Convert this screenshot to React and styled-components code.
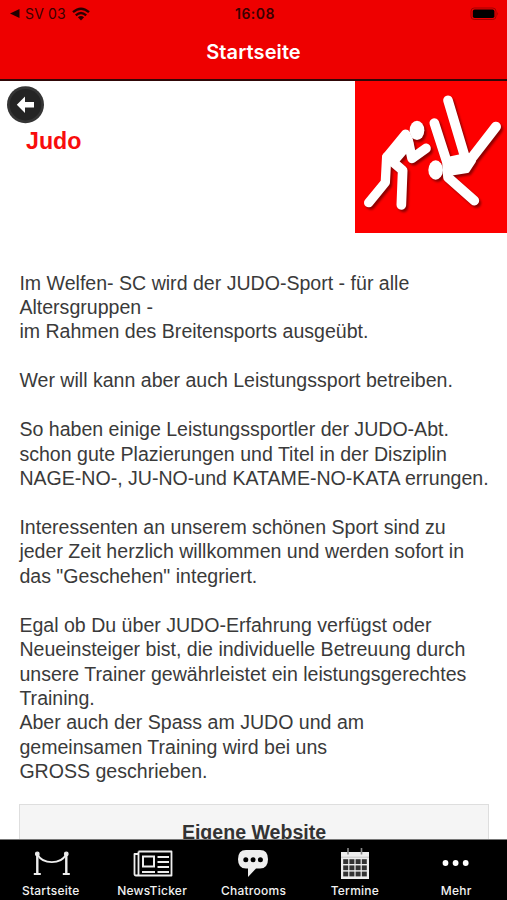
import React from 'react';
import styled, {createGlobalStyle} from "styled-components";

const GlobalStyle = createGlobalStyle`
  * {
    box-sizing: border-box;
  }

  body {
    margin: 0;
    background-color: #fff;
    font-family: "Liberation Sans", Arial, sans-serif;
  }
`

const Screen = styled.div`
  width: 507px;
  height: 900px;
  display: flex;
  flex-direction: column;
  overflow: hidden;
`

const Header = styled.header`
  height: 81px;
  flex-shrink: 0;
  background-color: #ee0000;
  border-bottom: 2px solid #300808;
  font-family: Inter, sans-serif;
`

const StatusBar = styled.div`
  height: 27px;
  display: grid;
  grid-template-columns: 1fr 1fr 1fr;
  align-items: center;
  padding: 0 7px 0 10px;
  color: #3a0000;
  font-size: 14px;
`

const StatusLeft = styled.div`
  display: flex;
  align-items: center;
`

const Carrier = styled.span`
  margin: 0 6px 0 5px;
  letter-spacing: 0.15px;
`

const Clock = styled.span`
  text-align: center;
  font-weight: 600;
  letter-spacing: 0.5px;
`

const StatusRight = styled.div`
  display: flex;
  justify-content: flex-end;
`

const HeaderTitle = styled.h1`
  margin: 0;
  height: 50px;
  line-height: 50px;
  text-align: center;
  color: #fff;
  font-size: 20px;
  font-weight: 600;
  letter-spacing: 0.1px;
`

const Content = styled.main`
  flex: 1;
  min-height: 0;
  overflow: hidden;
  background-color: #fff;
`

const Intro = styled.section`
  display: flex;
  justify-content: space-between;
  height: 152px;
`

const IntroLeft = styled.div`
  padding: 4px 0 0 6px;
`

const BackButton = styled.button`
  display: block;
  width: 39px;
  height: 39px;
  padding: 0;
  border: 0;
  background: none;
`

const Department = styled.h2`
  margin: 4px 0 0 20px;
  color: #f80d0d;
  font-size: 23.2px;
  line-height: 26px;
  font-weight: 700;
`

const Text = styled.div`
  padding: 37.5px 0 0 19.4px;
  color: #3a3a3a;
  font-size: 19.57px;
  line-height: 24.45px;
`

const Line = styled.div`
  height: 24.45px;
  white-space: nowrap;
`

const WebsiteCard = styled.div`
  height: 60px;
  margin: 20px 18px 0 19px;
  padding-top: 14px;
  border: 1px solid #dedede;
  background-color: #f5f5f5;
  color: #333;
  font-size: 19.57px;
  line-height: 26px;
  font-weight: 700;
  text-align: center;
`

const TabBar = styled.nav`
  height: 61px;
  flex-shrink: 0;
  display: grid;
  grid-template-columns: repeat(5, 1fr);
  background-color: #000;
  border-top: 1px solid #777;
`

const Tab = styled.div`
  display: flex;
  flex-direction: column;
  align-items: center;
  padding-top: 5px;
  color: #f2f2f2;
  font-family: Inter, sans-serif;
  font-size: 12px;
  line-height: 14px;
  font-weight: 500;
  letter-spacing: 0.25px;
`

const TabIcon = styled.svg`
  width: 48px;
  height: 36px;
  margin-bottom: 3px;
`

const lines = [
    "Im Welfen- SC wird der JUDO-Sport - für alle",
    "Altersgruppen -",
    "im Rahmen des Breitensports ausgeübt.",
    "",
    "Wer will kann aber auch Leistungssport betreiben.",
    "",
    "So haben einige Leistungssportler der JUDO-Abt.",
    "schon gute Plazierungen und Titel in der Disziplin",
    "NAGE-NO-, JU-NO-und KATAME-NO-KATA errungen.",
    "",
    "Interessenten an unserem schönen Sport sind zu",
    "jeder Zeit herzlich willkommen und werden sofort in",
    "das \"Geschehen\" integriert.",
    "",
    "Egal ob Du über JUDO-Erfahrung verfügst oder",
    "Neueinsteiger bist, die individuelle Betreuung durch",
    "unsere Trainer gewährleistet ein leistungsgerechtes",
    "Training.",
    "Aber auch der Spass am JUDO und am",
    "gemeinsamen Training wird bei uns",
    "GROSS geschrieben.",
];

const Wifi = () => (
    <svg width="18" height="14" viewBox="0 0 18 14" fill="none" stroke="#2a0000" strokeWidth="2.4">
        <path d="M1 5.2Q9 -1.8 17 5.2"/>
        <path d="M3.8 8.3Q9 3.8 14.2 8.3"/>
        <path d="M9 13.4L5.9 10.3Q9 7.9 12.1 10.3Z" fill="#2a0000" stroke="none"/>
    </svg>
);

const Battery = () => (
    <svg width="30" height="14" viewBox="0 0 30 14">
        <rect x="1" y="1" width="25" height="11.5" rx="3.2" fill="none" stroke="#a00000"/>
        <rect x="2.8" y="2.6" width="21.6" height="8.4" rx="1.8" fill="#000"/>
        <path d="M27.3 4.8q1.7 1.9 0 3.9z" fill="#a00000"/>
    </svg>
);

const BackIcon = () => (
    <svg width="39" height="39" viewBox="0 0 39 39">
        <circle cx="19.5" cy="19.7" r="18.5" fill="#353535"/>
        <circle cx="19.5" cy="19.7" r="15.8" fill="#242424"/>
        <path d="M10.8 19.8L19 11.6V17.1H28V22.5H19V28Z" fill="#fff"/>
    </svg>
);

// two wrestlers: the thrower on the left, the falling one on the right
const Fighters = () => (
    <g strokeLinecap="round" strokeLinejoin="round">
        <ellipse cx="201" cy="166" rx="22" ry="29" stroke="none"/>
        <path d="M167 178L111 246L136 252L176 206Z" strokeWidth="29"/>
        <path d="M174 194L186 250L228 220" strokeWidth="29" fill="none"/>
        <path d="M110 246L106 322L56 383" strokeWidth="28" fill="none"/>
        <path d="M124 257L158 286L154 390" strokeWidth="29" fill="none"/>
        <ellipse cx="257" cy="285" rx="22" ry="29" stroke="none"/>
        <path d="M253 144L291 262L294 307L373 377" strokeWidth="29" fill="none"/>
        <path d="M294 76L343 240" strokeWidth="29" fill="none"/>
        <path d="M438 155L362 253" strokeWidth="30" fill="none"/>
        <path d="M297 252L352 240L371 258L352 287L300 295Z" strokeWidth="14"/>
    </g>
);

const JudoPicture = () => (
    <svg width="152" height="152" viewBox="15 18 456 456">
        <defs>
            <filter id="soft"><feGaussianBlur stdDeviation="3"/></filter>
        </defs>
        <rect x="15" y="18" width="456" height="456" fill="#fd0000"/>
        <g transform="translate(6 7)" fill="#700000" stroke="#700000" opacity="0.8" filter="url(#soft)">
            <Fighters/>
        </g>
        <g fill="#fff" stroke="#fff"><Fighters/></g>
    </svg>
);

const icons = {
    start: (
        <g fill="none" stroke="#eee" strokeWidth="1.8">
            <path d="M10.3 10V28M39.3 10V28" strokeWidth="2.4"/>
            <path d="M6.8 29H13.8M35.8 29H42.8" strokeWidth="2"/>
            <path d="M10.8 10C16 19.5 33.6 19.5 38.8 10"/>
            <circle cx="10.3" cy="9" r="1.8" fill="#eee" strokeWidth="1.2"/>
            <circle cx="39.3" cy="9" r="1.8" fill="#eee" strokeWidth="1.2"/>
        </g>
    ),
    news: (
        <g fill="none" stroke="#eee" strokeWidth="1.8">
            <path d="M10.5 6.5H43.5V30.5H8Q6.5 30.5 6.5 29V9H10.5M10.5 6.5V29Q10.5 30.5 8.5 30.5" strokeLinejoin="round"/>
            <path d="M15 11.5H26V21.5H15Z" strokeWidth="2"/>
            <path d="M29.5 12H41M29.5 17H41M29.5 22H41M29.5 27H41M14 27H27"/>
        </g>
    ),
    chat: (
        <g fill="#eee">
            <path d="M17 5H31Q39 5 39 14.3Q39 23.5 31 23.5H27L19 32V23.5H17Q9 23.5 9 14.3Q9 5 17 5Z"/>
            <circle cx="16.8" cy="14.8" r="2.5" fill="#000"/>
            <circle cx="24.1" cy="14.8" r="2.5" fill="#000"/>
            <circle cx="31.4" cy="14.8" r="2.5" fill="#000"/>
        </g>
    ),
    calendar: (
        <g>
            <path d="M10 7H38V34H10Z" fill="#eee"/>
            <path d="M10 12.2H38" stroke="#bbb" strokeWidth="0.8"/>
            <path d="M17 3V9.5M30.5 3V9.5" stroke="#888" strokeWidth="1.6"/>
            {[14.2, 20.4, 26.6].map(y => [12.2, 18.4, 24.6, 30.8].map(x => (
                <rect key={x + "-" + y} x={x} y={y} width="5" height="4.8" fill="#333"/>
            )))}
        </g>
    ),
    more: (
        <g fill="#fff">
            <circle cx="13.5" cy="18" r="2.9"/>
            <circle cx="23.6" cy="18" r="2.9"/>
            <circle cx="33.7" cy="18" r="2.9"/>
        </g>
    ),
};

const tabs = [
    {label: "Startseite", icon: "start"},
    {label: "NewsTicker", icon: "news"},
    {label: "Chatrooms", icon: "chat"},
    {label: "Termine", icon: "calendar"},
    {label: "Mehr", icon: "more"},
];

const App = () => {
    return (
        <Screen>
            <GlobalStyle/>
            <Header>
                <StatusBar>
                    <StatusLeft>
                        <svg width="10" height="9" viewBox="0 0 10 9"><path d="M0 4.5L9.5 0V9Z" fill="#200000"/></svg>
                        <Carrier>SV 03</Carrier>
                        <Wifi/>
                    </StatusLeft>
                    <Clock>16:08</Clock>
                    <StatusRight><Battery/></StatusRight>
                </StatusBar>
                <HeaderTitle>Startseite</HeaderTitle>
            </Header>
            <Content>
                <Intro>
                    <IntroLeft>
                        <BackButton aria-label="Zurück"><BackIcon/></BackButton>
                        <Department>Judo</Department>
                    </IntroLeft>
                    <JudoPicture/>
                </Intro>
                <Text>
                    {lines.map((line, index) => <Line key={index}>{line}</Line>)}
                </Text>
                <WebsiteCard>Eigene Website</WebsiteCard>
            </Content>
            <TabBar>
                {tabs.map(tab => (
                    <Tab key={tab.label}>
                        <TabIcon viewBox="0 0 48 36">{icons[tab.icon]}</TabIcon>
                        {tab.label}
                    </Tab>
                ))}
            </TabBar>
        </Screen>
    );
};

export default App;
